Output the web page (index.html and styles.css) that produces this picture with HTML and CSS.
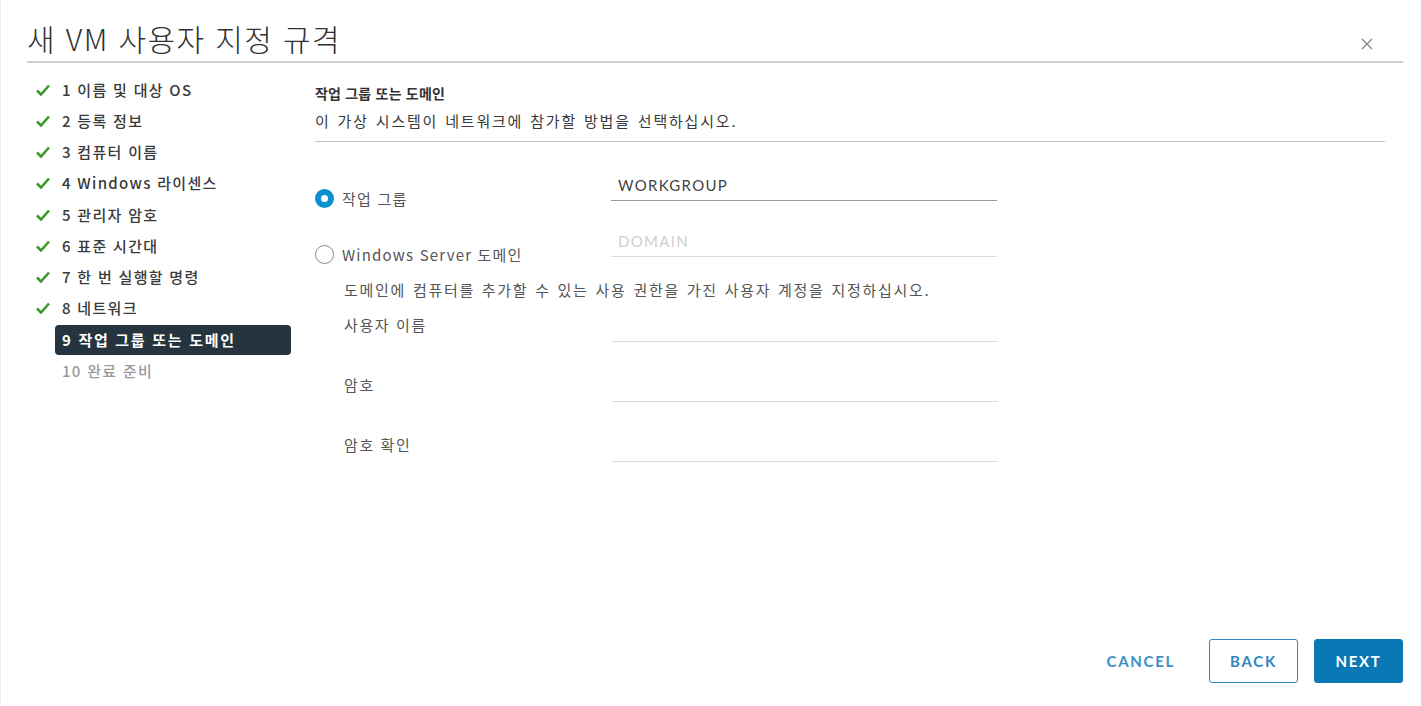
FILE: index.html
```html
<!DOCTYPE html>
<html lang="ko">
<head>
<meta charset="utf-8">
<title>새 VM 사용자 지정 규격</title>
<link rel="stylesheet" href="styles.css">
</head>
<body>
<div class="dialog">
  <header class="dlg-header">
    <h1 class="dlg-title">새 VM 사용자 지정 규격</h1>
    <button class="close" aria-label="닫기">
      <svg width="14" height="14" viewBox="0 0 14 14"><path d="M2 2 L12 12 M12 2 L2 12" stroke="#8a8a8a" stroke-width="1.4" fill="none"/></svg>
    </button>
  </header>
  <div class="dlg-body">
    <nav class="steps">
      <div class="step done"><span class="chk"><svg width="14" height="12" viewBox="0 0 14 12"><path d="M1 6.5 L5 10.5 L13 1.5" stroke="#3c9a2b" stroke-width="2.6" fill="none"/></svg></span><span class="lbl">1 이름 및 대상 OS</span></div>
      <div class="step done"><span class="chk"><svg width="14" height="12" viewBox="0 0 14 12"><path d="M1 6.5 L5 10.5 L13 1.5" stroke="#3c9a2b" stroke-width="2.6" fill="none"/></svg></span><span class="lbl">2 등록 정보</span></div>
      <div class="step done"><span class="chk"><svg width="14" height="12" viewBox="0 0 14 12"><path d="M1 6.5 L5 10.5 L13 1.5" stroke="#3c9a2b" stroke-width="2.6" fill="none"/></svg></span><span class="lbl">3 컴퓨터 이름</span></div>
      <div class="step done"><span class="chk"><svg width="14" height="12" viewBox="0 0 14 12"><path d="M1 6.5 L5 10.5 L13 1.5" stroke="#3c9a2b" stroke-width="2.6" fill="none"/></svg></span><span class="lbl">4 Windows 라이센스</span></div>
      <div class="step done"><span class="chk"><svg width="14" height="12" viewBox="0 0 14 12"><path d="M1 6.5 L5 10.5 L13 1.5" stroke="#3c9a2b" stroke-width="2.6" fill="none"/></svg></span><span class="lbl">5 관리자 암호</span></div>
      <div class="step done"><span class="chk"><svg width="14" height="12" viewBox="0 0 14 12"><path d="M1 6.5 L5 10.5 L13 1.5" stroke="#3c9a2b" stroke-width="2.6" fill="none"/></svg></span><span class="lbl">6 표준 시간대</span></div>
      <div class="step done"><span class="chk"><svg width="14" height="12" viewBox="0 0 14 12"><path d="M1 6.5 L5 10.5 L13 1.5" stroke="#3c9a2b" stroke-width="2.6" fill="none"/></svg></span><span class="lbl">7 한 번 실행할 명령</span></div>
      <div class="step done"><span class="chk"><svg width="14" height="12" viewBox="0 0 14 12"><path d="M1 6.5 L5 10.5 L13 1.5" stroke="#3c9a2b" stroke-width="2.6" fill="none"/></svg></span><span class="lbl">8 네트워크</span></div>
      <div class="step active"><span class="chk"></span><span class="lbl">9 작업 그룹 또는 도메인</span></div>
      <div class="step todo"><span class="chk"></span><span class="lbl">10 완료 준비</span></div>
    </nav>
    <main class="content">
      <div class="content-head">
        <div class="content-title">작업 그룹 또는 도메인</div>
        <div class="content-desc">이 가상 시스템이 네트워크에 참가할 방법을 선택하십시오.</div>
      </div>
      <div class="form">
        <div class="row row-first">
          <label class="choice"><span class="radio checked"></span><span>작업 그룹</span></label>
          <div class="field"><span class="value">WORKGROUP</span></div>
        </div>
        <div class="row row-second">
          <label class="choice"><span class="radio"></span><span>Windows Server 도메인</span></label>
          <div class="field"><span class="placeholder">DOMAIN</span></div>
        </div>
        <p class="help">도메인에 컴퓨터를 추가할 수 있는 사용 권한을 가진 사용자 계정을 지정하십시오.</p>
        <div class="row cred cred-first">
          <span class="cred-label">사용자 이름</span>
          <div class="field"></div>
        </div>
        <div class="row cred">
          <span class="cred-label">암호</span>
          <div class="field"></div>
        </div>
        <div class="row cred">
          <span class="cred-label">암호 확인</span>
          <div class="field"></div>
        </div>
      </div>
    </main>
  </div>
  <footer class="dlg-footer">
    <button class="btn btn-flat">CANCEL</button>
    <button class="btn btn-outline">BACK</button>
    <button class="btn btn-primary">NEXT</button>
  </footer>
</div>
</body>
</html>
```

FILE: styles.css
```css
* { box-sizing: border-box; }
html, body { margin: 0; padding: 0; background: #fff; }
body {
  font-family: Lato, "Noto Sans CJK KR", sans-serif;
  color: #333;
  width: 1421px;
  height: 706px;
  overflow: hidden;
}
.dialog {
  height: 706px;
  display: flex;
  flex-direction: column;
  border-left: 1px solid #f0f0f0;
}
.dlg-header {
  margin: 0 18px 0 26px;
  height: 63px;
  border-bottom: 2px solid #cfcfcf;
  display: flex;
  align-items: flex-start;
  justify-content: space-between;
}
.dlg-title {
  margin: 18px 0 0 0;
  font-family: "Noto Sans CJK KR", sans-serif;
  font-weight: 300;
  font-size: 30px;
  line-height: 40px;
  color: #313131;
  letter-spacing: 1.4px;
}
.close {
  background: none;
  border: 0;
  padding: 0;
  margin: 37px 29px 0 0;
  width: 14px;
  height: 14px;
  display: flex;
}
.dlg-body {
  flex: 1;
  display: flex;
  min-height: 0;
}
.steps {
  width: 290px;
  padding: 11px 0 0 35px;
  flex: none;
}
.step {
  height: 31.25px;
  display: flex;
  align-items: center;
}
.chk {
  width: 19px;
  display: flex;
  align-items: center;
  flex: none;
}
.lbl {
  flex: 1;
  height: 30px;
  line-height: 30px;
  padding: 0 7px;
  font-family: "Noto Sans CJK KR", sans-serif;
  font-size: 15px;
  font-weight: 500;
  color: #3a3a3a;
  border-radius: 4px;
  white-space: nowrap;
  letter-spacing: 1.3px;
}
.step.active .lbl {
  background: #25343e;
  color: #fff;
  font-weight: 700;
  letter-spacing: 1.7px;
}
.step.todo .lbl { color: #9a9a9a; }
.content {
  flex: 1;
  padding: 0 36px 0 24px;
}
.content-head {
  padding: 20px 0 10px;
  border-bottom: 1px solid #c4c4c4;
}
.content-title {
  font-family: "Noto Sans CJK KR", sans-serif;
  font-size: 14px;
  font-weight: 700;
  line-height: 20px;
  color: #333;
  letter-spacing: 0.2px;
}
.content-desc {
  margin-top: 8px;
  font-family: "Noto Sans CJK KR", sans-serif;
  font-size: 15px;
  line-height: 20px;
  color: #3a3a3a;
  letter-spacing: 1.8px;
  word-spacing: 1px;
}
.form { padding-top: 28px; }
.row {
  display: flex;
  align-items: flex-start;
}
.choice {
  width: 296px;
  flex: none;
  display: flex;
  align-items: center;
  gap: 8px;
  margin-top: 18px;
  height: 20px;
  font-family: "Noto Sans CJK KR", sans-serif;
  font-size: 15px;
  color: #555;
  letter-spacing: 1.2px;
}
.radio {
  width: 19px;
  height: 19px;
  border-radius: 50%;
  border: 1px solid #8c8c8c;
  background: #fff;
  flex: none;
}
.radio.checked {
  border: 6.5px solid #0a8fd0;
  background: #fff;
}
.field {
  width: 386px;
  height: 31px;
  border-bottom: 1px solid #9a9a9a;
  padding: 0 7px;
  display: flex;
  align-items: center;
  font-family: Lato, sans-serif;
  font-size: 15px;
  letter-spacing: 1.3px;
}
.value { color: #444; }
.placeholder { color: #cfcfcf; }
.row-second { margin-top: 18px; }
.row-second .field, .cred .field { border-bottom-color: #dcdcdc; }
.help {
  margin: 16px 0 0 29px;
  font-family: "Noto Sans CJK KR", sans-serif;
  font-size: 15px;
  line-height: 20px;
  color: #555;
  letter-spacing: 1.7px;
  word-spacing: 1px;
}
.cred { margin-top: 29px; }
.cred-first { margin-top: 11px; }
.cred-label {
  width: 297px;
  padding-left: 29px;
  flex: none;
  margin-top: 4px;
  line-height: 20px;
  font-family: "Noto Sans CJK KR", sans-serif;
  font-size: 15px;
  color: #555;
  letter-spacing: 1.6px;
}
.cred .field { width: 386px; }
.dlg-footer {
  display: flex;
  justify-content: flex-end;
  align-items: center;
  gap: 16px;
  padding: 0 18px 23px 0;
}
.btn {
  height: 44px;
  min-width: 89px;
  border-radius: 3px;
  font-family: Lato, sans-serif;
  font-weight: 700;
  font-size: 15px;
  letter-spacing: 1.7px;
  padding: 0 12px;
  cursor: pointer;
}
.btn-flat {
  background: none;
  border: 1px solid transparent;
  color: #3b8fc5;
  margin-right: 5px;
}
.btn-outline {
  background: #fff;
  border: 1px solid #2d89c2;
  color: #2f86bd;
}
.btn-primary {
  background: #0b78b6;
  border: 1px solid #0b78b6;
  color: #fff;
}
```
